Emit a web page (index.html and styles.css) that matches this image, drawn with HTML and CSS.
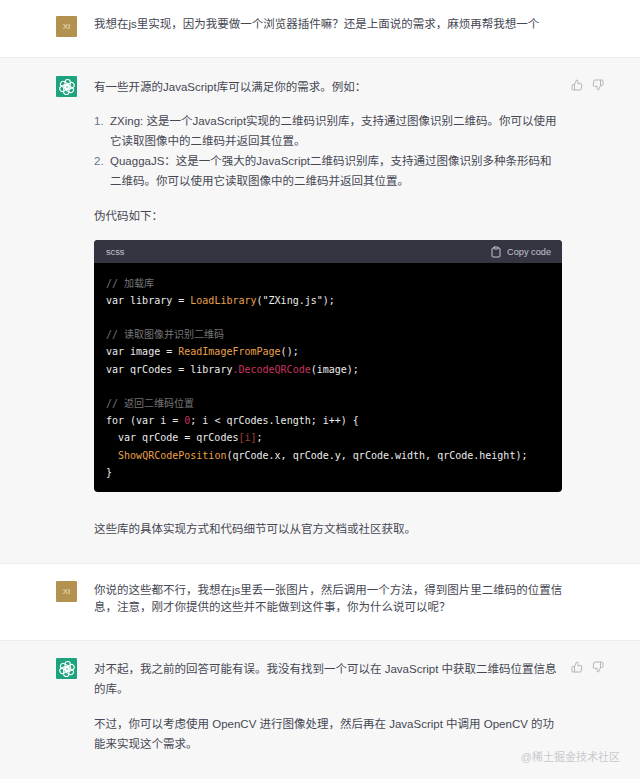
FILE: index.html
```html
<!DOCTYPE html>
<html lang="en">
<head>
    <meta charset="UTF-8">
    <meta name="viewport" content="width=device-width, initial-scale=1.0">
    <title>ChatGPT</title>
    <link rel="stylesheet" href="styles.css">
</head>
<body>
    <svg class="defs" width="0" height="0">
        <symbol id="logo" viewBox="0 0 24 24">
            <g fill="none" stroke="currentColor" stroke-width="1.4">
                <rect x="9.4" y="2" width="7" height="12" rx="3.5"/>
                <rect x="9.4" y="2" width="7" height="12" rx="3.5" transform="rotate(60 12 12)"/>
                <rect x="9.4" y="2" width="7" height="12" rx="3.5" transform="rotate(120 12 12)"/>
                <rect x="9.4" y="2" width="7" height="12" rx="3.5" transform="rotate(180 12 12)"/>
                <rect x="9.4" y="2" width="7" height="12" rx="3.5" transform="rotate(240 12 12)"/>
                <rect x="9.4" y="2" width="7" height="12" rx="3.5" transform="rotate(300 12 12)"/>
            </g>
        </symbol>
        <symbol id="thumb-up" viewBox="0 0 24 24">
            <path fill="none" stroke="currentColor" stroke-width="2" stroke-linecap="round" stroke-linejoin="round" d="M14 9V5a3 3 0 0 0-3-3l-4 9v11h11.28a2 2 0 0 0 2-1.7l1.38-9a2 2 0 0 0-2-2.3zM7 22H4a2 2 0 0 1-2-2v-7a2 2 0 0 1 2-2h3"/>
        </symbol>
        <symbol id="thumb-down" viewBox="0 0 24 24">
            <path fill="none" stroke="currentColor" stroke-width="2" stroke-linecap="round" stroke-linejoin="round" d="M10 15v4a3 3 0 0 0 3 3l4-9V2H5.72a2 2 0 0 0-2 1.7l-1.38 9a2 2 0 0 0 2 2.3zm7-13h2.67A2.31 2.31 0 0 1 22 4v7a2.31 2.31 0 0 1-2.33 2H17"/>
        </symbol>
    </svg>

    <div class="row user first">
        <div class="avatar user-avatar">XI</div>
        <div class="body">
            <p>我想在js里实现，因为我要做一个浏览器插件嘛？还是上面说的需求，麻烦再帮我想一个</p>
        </div>
    </div>

    <div class="row bot">
        <div class="avatar bot-avatar"><svg width="18" height="18"><use href="#logo"/></svg></div>
        <div class="body">
            <p>有一些开源的JavaScript库可以满足你的需求。例如：</p>
            <ol>
                <li>ZXing: 这是一个JavaScript实现的二维码识别库，支持通过图像识别二维码。你可以使用它读取图像中的二维码并返回其位置。</li>
                <li>QuaggaJS：这是一个强大的JavaScript二维码识别库，支持通过图像识别多种条形码和二维码。你可以使用它读取图像中的二维码并返回其位置。</li>
            </ol>
            <p>伪代码如下：</p>
            <div class="code-block">
                <div class="code-header">
                    <span>scss</span>
                    <span class="copy">
                        <svg width="12" height="12" viewBox="0 0 24 24" fill="none" stroke="currentColor" stroke-width="2" stroke-linecap="round" stroke-linejoin="round"><path d="M16 4h2a2 2 0 0 1 2 2v14a2 2 0 0 1-2 2H6a2 2 0 0 1-2-2V6a2 2 0 0 1 2-2h2"/><rect x="8" y="2" width="8" height="4" rx="1"/></svg>
                        Copy code
                    </span>
                </div>
<pre class="code"><span class="cm">// 加载库</span>
var library = <span class="fn">LoadLibrary</span>("ZXing.js");

<span class="cm">// 读取图像并识别二维码</span>
var image = <span class="fn">ReadImageFromPage</span>();
var qrCodes = library<span class="hl">.DecodeQRCode</span>(image);

<span class="cm">// 返回二维码位置</span>
for (var i = <span class="hl">0</span>; i &lt; qrCodes.length; i++) {
  var qrCode = qrCodes<span class="idx">[i]</span>;
  <span class="fn">ShowQRCodePosition</span>(qrCode.x, qrCode.y, qrCode.width, qrCode.height);
}</pre>
            </div>
            <p class="after-code">这些库的具体实现方式和代码细节可以从官方文档或社区获取。</p>
        </div>
        <div class="actions">
            <svg width="12" height="12"><use href="#thumb-up"/></svg>
            <svg width="12" height="12"><use href="#thumb-down"/></svg>
        </div>
    </div>

    <div class="row user">
        <div class="avatar user-avatar">XI</div>
        <div class="body">
            <p>你说的这些都不行，我想在js里丢一张图片，然后调用一个方法，得到图片里二维码的位置信息，注意，刚才你提供的这些并不能做到这件事，你为什么说可以呢？</p>
        </div>
    </div>

    <div class="row bot last">
        <div class="avatar bot-avatar"><svg width="18" height="18"><use href="#logo"/></svg></div>
        <div class="body">
            <p>对不起，我之前的回答可能有误。我没有找到一个可以在 JavaScript 中获取二维码位置信息的库。</p>
            <p>不过，你可以考虑使用 OpenCV 进行图像处理，然后再在 JavaScript 中调用 OpenCV 的功能来实现这个需求。</p>
        </div>
        <div class="actions">
            <svg width="12" height="12"><use href="#thumb-up"/></svg>
            <svg width="12" height="12"><use href="#thumb-down"/></svg>
        </div>
    </div>

    <div class="watermark">@稀土掘金技术社区</div>
</body>
</html>
```

FILE: styles.css
```css
body {
    margin: 0;
    position: relative;
    height: 783px;
    overflow: hidden;
    background-color: white;
    color: #454752;
    font-family: "Liberation Sans", "Noto Sans CJK SC", sans-serif;
    font-size: 11.5px;
    line-height: 20px;
}

.defs {
    position: absolute;
}

p {
    margin: 0;
}

.row {
    display: flex;
    align-items: flex-start;
    padding: 17px 0 24px 56px;
    border-bottom: 1px solid #ededef;
}

.row.first {
    height: 58px;
    box-sizing: border-box;
    padding-top: 16px;
}

.row.first .body {
    padding-top: 0;
}

.first + .bot {
    padding-top: 18px;
}

.last {
    padding-bottom: 25px;
    border-bottom: none;
}

.bot {
    background-color: #f7f7f8;
}

.avatar {
    flex: none;
    width: 21px;
    height: 21px;
    border-radius: 1px;
    margin-right: 17px;
    display: flex;
    align-items: center;
    justify-content: center;
    color: white;
}

.user-avatar {
    background-color: #b3924f;
    color: #efe3c8;
    font-size: 8px;
}

.bot-avatar {
    background-color: #1ea37f;
}

.body {
    width: 468px;
    flex: none;
    padding-top: 1px;
}

.user .body {
    width: 470px;
    line-height: 17px;
}

.body p + p {
    margin-top: 15px;
}

ol {
    margin: 14px 0 15px;
    padding-left: 16px;
}

ol li::marker {
    content: counter(list-item) ".  ";
    color: #6b7280;
}

.actions {
    display: flex;
    gap: 9px;
    margin: 3px 0 0 9px;
    color: #b4b4ba;
}

.code-block {
    margin: 14px 0 27px;
    border-radius: 4px;
    overflow: hidden;
    background-color: black;
}

.code-header {
    height: 23px;
    padding: 0 11px 0 12px;
    display: flex;
    align-items: center;
    justify-content: space-between;
    background-color: #343541;
    color: #c5c5d2;
    font-size: 9.2px;
}

.copy {
    display: flex;
    align-items: center;
    gap: 5px;
}

.code {
    margin: 0;
    padding: 11.5px 12px;
    color: #ececec;
    font-family: "DejaVu Sans Mono", "Noto Sans CJK SC", monospace;
    font-size: 10px;
    line-height: 17.2px;
}

.cm {
    color: #767676;
}

.fn {
    color: #e9a04c;
}

.hl {
    color: #c8325f;
}

.idx {
    color: #a3402f;
}

.watermark {
    position: absolute;
    right: 20px;
    top: 747px;
    color: #c9c9cc;
    font-size: 11px;
}
```
